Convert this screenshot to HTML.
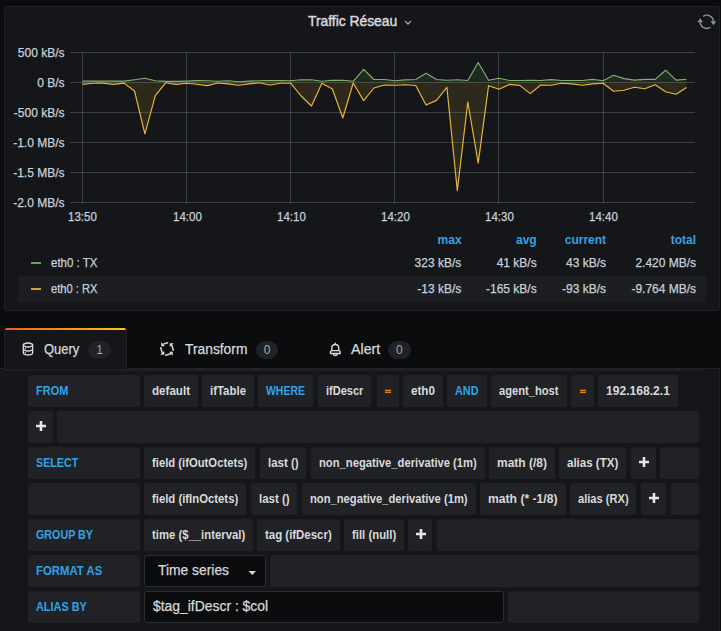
<!DOCTYPE html>
<html><head><meta charset="utf-8">
<style>
html,body{margin:0;padding:0;}
body{width:721px;height:631px;overflow:hidden;background:#0b0c0e;position:relative;font-family:"Liberation Sans",sans-serif;color:#c7d0d9;}
.abs{position:absolute;}
.t{position:absolute;white-space:nowrap;transform-origin:0 0;}
.bx{position:absolute;border-radius:3px;}
.panel{position:absolute;left:4px;top:6px;width:714px;height:303px;background:#141619;border:1px solid #202226;border-radius:3px;}
.badge{position:absolute;height:18px;width:22.4px;border-radius:9px;background:#202226;color:#9fa7b3;font-size:12px;line-height:18px;text-align:center;}
.qc{position:absolute;left:0;top:368px;width:719px;height:263px;background:#141619;border-top:1px solid #202226;border-right:1px solid #202226;}
.inp{position:absolute;background:#0b0c0e;border:1px solid #2a2d32;border-radius:3px;box-sizing:border-box;}
.caret{position:absolute;width:0;height:0;border-left:3.8px solid transparent;border-right:3.8px solid transparent;border-top:3.8px solid #d8d9da;}
</style></head><body>
<div class="panel"></div>
<svg class="abs" style="left:403px;top:18.5px" width="10" height="8" viewBox="0 0 10 8"><path d="M2 2 L5 5 L8 2" stroke="#9fa7b3" stroke-width="1.3" fill="none"/></svg>
<svg class="abs" style="left:696px;top:13px" width="22" height="18" viewBox="0 0 22 18">
 <g stroke="#8e9299" stroke-width="1.4" fill="none">
 <path d="M7.11,3.33 A6.6,6.6 0 0 1 17.4,8.6"/>
 <path d="M14.49,14.27 A6.6,6.6 0 0 1 4.2,9.0"/>
 </g>
 <path d="M14.6,8.3 L20.2,8.3 L17.4,12.3 Z" fill="#8e9299"/>
 <path d="M1.4,9.3 L7.0,9.3 L4.2,5.3 Z" fill="#8e9299"/>
</svg>
<svg class="abs" style="left:0;top:0" width="721" height="320">
 <g stroke="#c7d0d9" stroke-opacity="0.22" stroke-width="1" shape-rendering="crispEdges">
  <line x1="70" y1="52.5" x2="695" y2="52.5"/>
  <line x1="70" y1="82.5" x2="695" y2="82.5"/>
  <line x1="70" y1="112.5" x2="695" y2="112.5"/>
  <line x1="70" y1="142.5" x2="695" y2="142.5"/>
  <line x1="70" y1="172.5" x2="695" y2="172.5"/>
  <line x1="70" y1="202.5" x2="695" y2="202.5"/>
  <line x1="82.5" y1="52" x2="82.5" y2="203"/>
  <line x1="186.5" y1="52" x2="186.5" y2="203"/>
  <line x1="290.5" y1="52" x2="290.5" y2="203"/>
  <line x1="394.5" y1="52" x2="394.5" y2="203"/>
  <line x1="498.5" y1="52" x2="498.5" y2="203"/>
  <line x1="603.5" y1="52" x2="603.5" y2="203"/>
 </g>
 <path d="M82.4,82.0 L82.4,84.4 L92.8,83.3 L103.2,83.1 L113.6,84.4 L124.1,83.1 L134.5,91.0 L144.9,133.8 L155.3,95.6 L165.7,82.8 L176.1,84.4 L186.6,83.3 L197.0,84.2 L207.4,85.6 L217.8,83.0 L228.2,83.9 L238.6,85.3 L249.0,83.9 L259.5,82.8 L269.9,85.0 L280.3,83.3 L290.7,83.2 L301.1,96.0 L311.5,106.0 L321.9,83.3 L332.4,89.0 L342.8,118.0 L353.2,83.0 L363.6,100.6 L374.0,88.0 L384.4,85.0 L394.9,85.2 L405.3,84.7 L415.7,85.5 L426.1,105.0 L436.5,100.4 L446.9,87.3 L457.3,190.6 L467.8,102.0 L478.2,163.1 L488.6,85.7 L499.0,89.3 L509.4,84.4 L519.8,85.4 L530.2,93.6 L540.7,85.0 L551.1,85.2 L561.5,83.3 L571.9,83.9 L582.3,85.2 L592.7,83.9 L603.1,83.3 L613.6,91.3 L624.0,90.3 L634.4,87.2 L644.8,88.8 L655.2,84.7 L665.6,91.7 L676.1,94.2 L686.5,87.4 L686.5,82.0 Z" fill="#eab839" fill-opacity="0.12"/>
 <path d="M82.4,82.0 L82.4,81.1 L92.8,81.1 L103.2,81.1 L113.6,81.1 L124.1,81.1 L134.5,79.8 L144.9,78.3 L155.3,80.8 L165.7,81.4 L176.1,81.4 L186.6,81.1 L197.0,80.6 L207.4,80.8 L217.8,81.2 L228.2,80.8 L238.6,81.7 L249.0,81.1 L259.5,80.8 L269.9,80.6 L280.3,80.6 L290.7,80.7 L301.1,79.8 L311.5,79.8 L321.9,81.2 L332.4,80.3 L342.8,80.3 L353.2,81.3 L363.6,69.3 L374.0,79.5 L384.4,79.5 L394.9,80.8 L405.3,79.9 L415.7,79.5 L426.1,73.3 L436.5,79.5 L446.9,80.3 L457.3,79.7 L467.8,80.5 L478.2,62.5 L488.6,80.3 L499.0,78.3 L509.4,80.5 L519.8,80.5 L530.2,80.2 L540.7,80.5 L551.1,79.6 L561.5,80.5 L571.9,80.5 L582.3,80.5 L592.7,79.4 L603.1,80.7 L613.6,75.3 L624.0,78.6 L634.4,80.1 L644.8,79.4 L655.2,79.4 L665.6,70.2 L676.1,80.1 L686.5,79.2 L686.5,82.0 Z" fill="#7eb26d" fill-opacity="0.12"/>
 <polyline points="82.4,81.1 92.8,81.1 103.2,81.1 113.6,81.1 124.1,81.1 134.5,79.8 144.9,78.3 155.3,80.8 165.7,81.4 176.1,81.4 186.6,81.1 197.0,80.6 207.4,80.8 217.8,81.2 228.2,80.8 238.6,81.7 249.0,81.1 259.5,80.8 269.9,80.6 280.3,80.6 290.7,80.7 301.1,79.8 311.5,79.8 321.9,81.2 332.4,80.3 342.8,80.3 353.2,81.3 363.6,69.3 374.0,79.5 384.4,79.5 394.9,80.8 405.3,79.9 415.7,79.5 426.1,73.3 436.5,79.5 446.9,80.3 457.3,79.7 467.8,80.5 478.2,62.5 488.6,80.3 499.0,78.3 509.4,80.5 519.8,80.5 530.2,80.2 540.7,80.5 551.1,79.6 561.5,80.5 571.9,80.5 582.3,80.5 592.7,79.4 603.1,80.7 613.6,75.3 624.0,78.6 634.4,80.1 644.8,79.4 655.2,79.4 665.6,70.2 676.1,80.1 686.5,79.2" fill="none" stroke="#7eb26d" stroke-width="1.15" stroke-linejoin="round"/>
 <polyline points="82.4,84.4 92.8,83.3 103.2,83.1 113.6,84.4 124.1,83.1 134.5,91.0 144.9,133.8 155.3,95.6 165.7,82.8 176.1,84.4 186.6,83.3 197.0,84.2 207.4,85.6 217.8,83.0 228.2,83.9 238.6,85.3 249.0,83.9 259.5,82.8 269.9,85.0 280.3,83.3 290.7,83.2 301.1,96.0 311.5,106.0 321.9,83.3 332.4,89.0 342.8,118.0 353.2,83.0 363.6,100.6 374.0,88.0 384.4,85.0 394.9,85.2 405.3,84.7 415.7,85.5 426.1,105.0 436.5,100.4 446.9,87.3 457.3,190.6 467.8,102.0 478.2,163.1 488.6,85.7 499.0,89.3 509.4,84.4 519.8,85.4 530.2,93.6 540.7,85.0 551.1,85.2 561.5,83.3 571.9,83.9 582.3,85.2 592.7,83.9 603.1,83.3 613.6,91.3 624.0,90.3 634.4,87.2 644.8,88.8 655.2,84.7 665.6,91.7 676.1,94.2 686.5,87.4" fill="none" stroke="#eab839" stroke-width="1.15" stroke-linejoin="round"/>
</svg>
<div class="abs" style="left:31px;top:262px;width:10px;height:2px;background:#70a060"></div>
<div class="abs" style="left:18px;top:276px;width:688px;height:26px;background:#1c1e22"></div>
<div class="abs" style="left:31px;top:288px;width:10px;height:2px;background:#d0a334"></div>


<div class="qc"></div>
<div class="abs" style="left:4px;top:369px;width:699px;height:2px;background:#1d1f23"></div>
<div class="abs" style="left:4px;top:328px;width:121px;height:41px;background:#141619;border-left:1px solid #202226;border-right:1px solid #202226;border-radius:3px 3px 0 0;overflow:hidden">
 <div class="abs" style="left:0;top:0;width:121px;height:2px;background:linear-gradient(90deg,#f05a28,#fbca0a)"></div>
</div>
<svg class="abs" style="left:20px;top:341px" width="16" height="16" viewBox="0 0 24 24"><path fill="#d8d9da" d="M8,16.5a1,1,0,1,0,1,1A1,1,0,0,0,8,16.5ZM12,2C8,2,4,3.37,4,6V18c0,2.63,4,4,8,4s8-1.37,8-4V6C20,3.37,16,2,12,2Zm6,16c0,.71-2.28,2-6,2s-6-1.29-6-2V14.73A13.16,13.16,0,0,0,12,16a13.16,13.16,0,0,0,6-1.27Zm0-6c0,.71-2.28,2-6,2s-6-1.290-6-2V8.73A13.16,13.16,0,0,0,12,10a13.160,13.160,0,0,0,6-1.27ZM12,8C8.28,8,6,6.71,6,6s2.28-2,6-2,6,1.29,6,2S15.72,8,12,8ZM8,10.5a1,1,0,1,0,1,1A1,1,0,0,0,8,10.5Z"/></svg>
<div class="badge" style="left:88.3px;top:340.8px">1</div>
<svg class="abs" style="left:158px;top:340px" width="18" height="18" viewBox="0 0 18 18"><g stroke-linejoin="round"><path d="M3.2,2.3 L3.2,6.3 L7,6.3 Z" fill="#d8d9da"/><path d="M5.5,4.1 L9.6,2.8" stroke="#d8d9da" stroke-width="1.5" stroke-linecap="round"/><g transform="rotate(90 9 9)"><path d="M3.2,2.3 L3.2,6.3 L7,6.3 Z" fill="#d8d9da"/><path d="M5.3,4.2 L10.2,2.7" stroke="#d8d9da" stroke-width="1.5" stroke-linecap="round"/></g><g transform="rotate(180 9 9)"><path d="M3.2,2.3 L3.2,6.3 L7,6.3 Z" fill="#d8d9da"/><path d="M5.3,4.2 L10.2,2.7" stroke="#d8d9da" stroke-width="1.5" stroke-linecap="round"/></g><g transform="rotate(270 9 9)"><path d="M3.2,2.3 L3.2,6.3 L7,6.3 Z" fill="#d8d9da"/><path d="M5.3,4.2 L10.2,2.7" stroke="#d8d9da" stroke-width="1.5" stroke-linecap="round"/></g></g></svg>
<div class="badge" style="left:256px;top:340.8px">0</div>
<svg class="abs" style="left:326.6px;top:340.7px" width="16.6" height="16.6" viewBox="0 0 24 24"><path fill="#d8d9da" d="M18,13.18V10a6,6,0,0,0-5-5.91V3a1,1,0,0,0-2,0V4.09A6,6,0,0,0,6,10v3.18A3,3,0,0,0,4,16v2a1,1,0,0,0,1,1H8.14a4,4,0,0,0,7.72,0H19a1,1,0,0,0,1-1V16A3,3,0,0,0,18,13.18ZM8,10a4,4,0,0,1,8,0v3H8Zm4,10a2,2,0,0,1-1.72-1h3.44A2,2,0,0,1,12,20Zm6-3H6V16a1,1,0,0,1,1-1H17a1,1,0,0,1,1,1Z"/></svg>
<div class="badge" style="left:388.2px;top:340.8px">0</div>
<div class="t" style="left:308.40px;top:13.00px;font-size:14px;line-height:16px;color:#d8d9da;transform:scaleX(0.9882);-webkit-text-stroke:0.45px #d8d9da;">Traffic Réseau</div>
<div class="t" style="left:17.81px;top:45.60px;font-size:12px;line-height:14px;color:#c7d0d9;transform:scaleX(1.0000);-webkit-text-stroke:0.25px #c7d0d9;">500 kB/s</div>
<div class="t" style="left:37.15px;top:75.60px;font-size:12px;line-height:14px;color:#c7d0d9;transform:scaleX(1.0000);-webkit-text-stroke:0.25px #c7d0d9;">0 B/s</div>
<div class="t" style="left:13.81px;top:105.60px;font-size:12px;line-height:14px;color:#c7d0d9;transform:scaleX(1.0000);-webkit-text-stroke:0.25px #c7d0d9;">-500 kB/s</div>
<div class="t" style="left:13.15px;top:135.60px;font-size:12px;line-height:14px;color:#c7d0d9;transform:scaleX(1.0000);-webkit-text-stroke:0.25px #c7d0d9;">-1.0 MB/s</div>
<div class="t" style="left:13.15px;top:165.60px;font-size:12px;line-height:14px;color:#c7d0d9;transform:scaleX(1.0000);-webkit-text-stroke:0.25px #c7d0d9;">-1.5 MB/s</div>
<div class="t" style="left:13.15px;top:195.60px;font-size:12px;line-height:14px;color:#c7d0d9;transform:scaleX(1.0000);-webkit-text-stroke:0.25px #c7d0d9;">-2.0 MB/s</div>
<div class="t" style="left:68.39px;top:210.00px;font-size:12px;line-height:14px;color:#c7d0d9;transform:scaleX(0.9600);-webkit-text-stroke:0.25px #c7d0d9;">13:50</div>
<div class="t" style="left:172.59px;top:210.00px;font-size:12px;line-height:14px;color:#c7d0d9;transform:scaleX(0.9600);-webkit-text-stroke:0.25px #c7d0d9;">14:00</div>
<div class="t" style="left:276.79px;top:210.00px;font-size:12px;line-height:14px;color:#c7d0d9;transform:scaleX(0.9600);-webkit-text-stroke:0.25px #c7d0d9;">14:10</div>
<div class="t" style="left:380.99px;top:210.00px;font-size:12px;line-height:14px;color:#c7d0d9;transform:scaleX(0.9600);-webkit-text-stroke:0.25px #c7d0d9;">14:20</div>
<div class="t" style="left:485.19px;top:210.00px;font-size:12px;line-height:14px;color:#c7d0d9;transform:scaleX(0.9600);-webkit-text-stroke:0.25px #c7d0d9;">14:30</div>
<div class="t" style="left:589.39px;top:210.00px;font-size:12px;line-height:14px;color:#c7d0d9;transform:scaleX(0.9600);-webkit-text-stroke:0.25px #c7d0d9;">14:40</div>
<div class="t" style="left:437.58px;top:233.00px;font-size:12px;line-height:14px;color:#33a2e5;font-weight:bold;transform:scaleX(1.0000);">max</div>
<div class="t" style="left:516.02px;top:233.00px;font-size:12px;line-height:14px;color:#33a2e5;font-weight:bold;transform:scaleX(1.0000);">avg</div>
<div class="t" style="left:564.76px;top:233.00px;font-size:12px;line-height:14px;color:#33a2e5;font-weight:bold;transform:scaleX(1.0000);">current</div>
<div class="t" style="left:670.77px;top:233.00px;font-size:12px;line-height:14px;color:#33a2e5;font-weight:bold;transform:scaleX(1.0000);">total</div>
<div class="t" style="left:51.00px;top:256.00px;font-size:12px;line-height:14px;color:#c7d0d9;transform:scaleX(0.9593);-webkit-text-stroke:0.25px #c7d0d9;">eth0 : TX</div>
<div class="t" style="left:414.61px;top:256.00px;font-size:12px;line-height:14px;color:#c7d0d9;transform:scaleX(1.0000);-webkit-text-stroke:0.25px #c7d0d9;">323 kB/s</div>
<div class="t" style="left:496.68px;top:256.00px;font-size:12px;line-height:14px;color:#c7d0d9;transform:scaleX(1.0000);-webkit-text-stroke:0.25px #c7d0d9;">41 kB/s</div>
<div class="t" style="left:566.08px;top:256.00px;font-size:12px;line-height:14px;color:#c7d0d9;transform:scaleX(1.0000);-webkit-text-stroke:0.25px #c7d0d9;">43 kB/s</div>
<div class="t" style="left:635.40px;top:256.00px;font-size:12px;line-height:14px;color:#c7d0d9;transform:scaleX(1.0000);-webkit-text-stroke:0.25px #c7d0d9;">2.420 MB/s</div>
<div class="t" style="left:51.00px;top:282.00px;font-size:12px;line-height:14px;color:#c7d0d9;transform:scaleX(0.9295);-webkit-text-stroke:0.25px #c7d0d9;">eth0 : RX</div>
<div class="t" style="left:417.28px;top:282.00px;font-size:12px;line-height:14px;color:#c7d0d9;transform:scaleX(1.0000);-webkit-text-stroke:0.25px #c7d0d9;">-13 kB/s</div>
<div class="t" style="left:486.01px;top:282.00px;font-size:12px;line-height:14px;color:#c7d0d9;transform:scaleX(1.0000);-webkit-text-stroke:0.25px #c7d0d9;">-165 kB/s</div>
<div class="t" style="left:562.08px;top:282.00px;font-size:12px;line-height:14px;color:#c7d0d9;transform:scaleX(1.0000);-webkit-text-stroke:0.25px #c7d0d9;">-93 kB/s</div>
<div class="t" style="left:631.41px;top:282.00px;font-size:12px;line-height:14px;color:#c7d0d9;transform:scaleX(1.0000);-webkit-text-stroke:0.25px #c7d0d9;">-9.764 MB/s</div>
<div class="t" style="left:44.30px;top:341.00px;font-size:14px;line-height:16px;color:#d8d9da;transform:scaleX(0.9259);-webkit-text-stroke:0.25px #d8d9da;">Query</div>
<div class="t" style="left:184.60px;top:341.00px;font-size:14px;line-height:16px;color:#d8d9da;transform:scaleX(0.9863);-webkit-text-stroke:0.25px #d8d9da;">Transform</div>
<div class="t" style="left:350.80px;top:341.00px;font-size:14px;line-height:16px;color:#d8d9da;transform:scaleX(1.0144);-webkit-text-stroke:0.25px #d8d9da;">Alert</div>
<div class="bx" style="left:28px;top:375px;width:112.0px;height:32px;background:#202226"></div>
<div class="t" style="left:36.00px;top:383.00px;font-size:13px;line-height:16px;color:#33a2e5;font-weight:bold;transform:scaleX(0.8440);">FROM</div>
<div class="bx" style="left:144px;top:375px;width:54.0px;height:32px;background:#202226"></div>
<div class="t" style="left:152.00px;top:383.00px;font-size:13px;line-height:16px;color:#d8d9da;font-weight:bold;transform:scaleX(0.8918);">default</div>
<div class="bx" style="left:202px;top:375px;width:52.0px;height:32px;background:#202226"></div>
<div class="t" style="left:210.00px;top:383.00px;font-size:13px;line-height:16px;color:#d8d9da;font-weight:bold;transform:scaleX(0.8796);">ifTable</div>
<div class="bx" style="left:258.3px;top:375px;width:54.9px;height:32px;background:#202226"></div>
<div class="t" style="left:266.30px;top:383.00px;font-size:13px;line-height:16px;color:#33a2e5;font-weight:bold;transform:scaleX(0.8039);">WHERE</div>
<div class="bx" style="left:318.2px;top:375px;width:53.3px;height:32px;background:#202226"></div>
<div class="t" style="left:326.20px;top:383.00px;font-size:13px;line-height:16px;color:#d8d9da;font-weight:bold;transform:scaleX(0.8462);">ifDescr</div>
<div class="bx" style="left:376.5px;top:375px;width:22.3px;height:32px;background:#202226"></div>
<svg class="abs" style="left:383.95px;top:387px" width="8" height="8" viewBox="0 0 8 8"><rect x="0.9" y="2.7" width="6.2" height="1.4" fill="#eb7b18"/><rect x="0.9" y="4.7" width="6.2" height="1.4" fill="#eb7b18"/></svg>
<div class="bx" style="left:403.1px;top:375px;width:39.9px;height:32px;background:#202226"></div>
<div class="t" style="left:411.10px;top:383.00px;font-size:13px;line-height:16px;color:#d8d9da;font-weight:bold;transform:scaleX(0.8941);">eth0</div>
<div class="bx" style="left:447.3px;top:375px;width:39.5px;height:32px;background:#202226"></div>
<div class="t" style="left:455.30px;top:383.00px;font-size:13px;line-height:16px;color:#33a2e5;font-weight:bold;transform:scaleX(0.8344);">AND</div>
<div class="bx" style="left:491px;top:375px;width:75.5px;height:32px;background:#202226"></div>
<div class="t" style="left:499.00px;top:383.00px;font-size:13px;line-height:16px;color:#d8d9da;font-weight:bold;transform:scaleX(0.8581);">agent_host</div>
<div class="bx" style="left:570.8px;top:375px;width:23.0px;height:32px;background:#202226"></div>
<svg class="abs" style="left:578.60px;top:387px" width="8" height="8" viewBox="0 0 8 8"><rect x="0.9" y="2.7" width="6.2" height="1.4" fill="#eb7b18"/><rect x="0.9" y="4.7" width="6.2" height="1.4" fill="#eb7b18"/></svg>
<div class="bx" style="left:598.1px;top:375px;width:79.9px;height:32px;background:#202226"></div>
<div class="t" style="left:606.10px;top:383.00px;font-size:13px;line-height:16px;color:#d8d9da;font-weight:bold;transform:scaleX(0.9305);">192.168.2.1</div>
<div class="bx" style="left:28px;top:411px;width:24.7px;height:32px;background:#202226"></div>
<svg class="abs" style="left:34.85px;top:420.10px" width="12" height="12" viewBox="0 0 12 12"><path d="M1,4.7 H11 V7.3 H1 Z M4.7,1 H7.3 V11 H4.7 Z" fill="#e4e6e8"/></svg>
<div class="bx" style="left:57.3px;top:411px;width:641.7px;height:32px;background:#202226"></div>
<div class="bx" style="left:28px;top:447px;width:112.0px;height:32px;background:#202226"></div>
<div class="t" style="left:36.00px;top:455.00px;font-size:13px;line-height:16px;color:#33a2e5;font-weight:bold;transform:scaleX(0.8229);">SELECT</div>
<div class="bx" style="left:144.3px;top:447px;width:111.2px;height:32px;background:#202226"></div>
<div class="t" style="left:152.30px;top:455.00px;font-size:13px;line-height:16px;color:#d8d9da;font-weight:bold;transform:scaleX(0.8672);">field (ifOutOctets)</div>
<div class="bx" style="left:259.8px;top:447px;width:46.6px;height:32px;background:#202226"></div>
<div class="t" style="left:267.80px;top:455.00px;font-size:13px;line-height:16px;color:#d8d9da;font-weight:bold;transform:scaleX(0.8826);">last ()</div>
<div class="bx" style="left:311px;top:447px;width:173.8px;height:32px;background:#202226"></div>
<div class="t" style="left:319.00px;top:455.00px;font-size:13px;line-height:16px;color:#d8d9da;font-weight:bold;transform:scaleX(0.8633);">non_negative_derivative (1m)</div>
<div class="bx" style="left:489px;top:447px;width:65.9px;height:32px;background:#202226"></div>
<div class="t" style="left:497.00px;top:455.00px;font-size:13px;line-height:16px;color:#d8d9da;font-weight:bold;transform:scaleX(0.9212);">math (/8)</div>
<div class="bx" style="left:559.2px;top:447px;width:67.3px;height:32px;background:#202226"></div>
<div class="t" style="left:567.20px;top:455.00px;font-size:13px;line-height:16px;color:#d8d9da;font-weight:bold;transform:scaleX(0.8876);">alias (TX)</div>
<div class="bx" style="left:630.8px;top:447px;width:25.0px;height:32px;background:#202226"></div>
<svg class="abs" style="left:637.80px;top:456.10px" width="12" height="12" viewBox="0 0 12 12"><path d="M1,4.7 H11 V7.3 H1 Z M4.7,1 H7.3 V11 H4.7 Z" fill="#e4e6e8"/></svg>
<div class="bx" style="left:660.1px;top:447px;width:38.9px;height:32px;background:#202226"></div>
<div class="bx" style="left:28px;top:483px;width:112.0px;height:32px;background:#202226"></div>
<div class="bx" style="left:144.3px;top:483px;width:102.2px;height:32px;background:#202226"></div>
<div class="t" style="left:152.30px;top:491.00px;font-size:13px;line-height:16px;color:#d8d9da;font-weight:bold;transform:scaleX(0.8712);">field (ifInOctets)</div>
<div class="bx" style="left:250.8px;top:483px;width:46.7px;height:32px;background:#202226"></div>
<div class="t" style="left:258.80px;top:491.00px;font-size:13px;line-height:16px;color:#d8d9da;font-weight:bold;transform:scaleX(0.8855);">last ()</div>
<div class="bx" style="left:302.2px;top:483px;width:173.6px;height:32px;background:#202226"></div>
<div class="t" style="left:310.20px;top:491.00px;font-size:13px;line-height:16px;color:#d8d9da;font-weight:bold;transform:scaleX(0.8622);">non_negative_derivative (1m)</div>
<div class="bx" style="left:480.4px;top:483px;width:85.5px;height:32px;background:#202226"></div>
<div class="t" style="left:488.40px;top:491.00px;font-size:13px;line-height:16px;color:#d8d9da;font-weight:bold;transform:scaleX(0.9341);">math (* -1/8)</div>
<div class="bx" style="left:569.9px;top:483px;width:66.6px;height:32px;background:#202226"></div>
<div class="t" style="left:577.90px;top:491.00px;font-size:13px;line-height:16px;color:#d8d9da;font-weight:bold;transform:scaleX(0.8541);">alias (RX)</div>
<div class="bx" style="left:640.8px;top:483px;width:25.6px;height:32px;background:#202226"></div>
<svg class="abs" style="left:648.10px;top:492.10px" width="12" height="12" viewBox="0 0 12 12"><path d="M1,4.7 H11 V7.3 H1 Z M4.7,1 H7.3 V11 H4.7 Z" fill="#e4e6e8"/></svg>
<div class="bx" style="left:671.1px;top:483px;width:27.9px;height:32px;background:#202226"></div>
<div class="bx" style="left:28px;top:519px;width:112.0px;height:32px;background:#202226"></div>
<div class="t" style="left:36.00px;top:527.00px;font-size:13px;line-height:16px;color:#33a2e5;font-weight:bold;transform:scaleX(0.8248);">GROUP BY</div>
<div class="bx" style="left:144px;top:519px;width:109.2px;height:32px;background:#202226"></div>
<div class="t" style="left:152.00px;top:527.00px;font-size:13px;line-height:16px;color:#d8d9da;font-weight:bold;transform:scaleX(0.8716);">time ($__interval)</div>
<div class="bx" style="left:256.9px;top:519px;width:82.7px;height:32px;background:#202226"></div>
<div class="t" style="left:264.90px;top:527.00px;font-size:13px;line-height:16px;color:#d8d9da;font-weight:bold;transform:scaleX(0.8794);">tag (ifDescr)</div>
<div class="bx" style="left:343.8px;top:519px;width:60.2px;height:32px;background:#202226"></div>
<div class="t" style="left:351.80px;top:527.00px;font-size:13px;line-height:16px;color:#d8d9da;font-weight:bold;transform:scaleX(0.8746);">fill (null)</div>
<div class="bx" style="left:408.1px;top:519px;width:24.4px;height:32px;background:#202226"></div>
<svg class="abs" style="left:414.80px;top:528.10px" width="12" height="12" viewBox="0 0 12 12"><path d="M1,4.7 H11 V7.3 H1 Z M4.7,1 H7.3 V11 H4.7 Z" fill="#e4e6e8"/></svg>
<div class="bx" style="left:436.7px;top:519px;width:262.3px;height:32px;background:#202226"></div>
<div class="bx" style="left:28px;top:555px;width:112.0px;height:32px;background:#202226"></div>
<div class="t" style="left:36.00px;top:563.00px;font-size:13px;line-height:16px;color:#33a2e5;font-weight:bold;transform:scaleX(0.8731);">FORMAT AS</div>
<div class="inp" style="left:144px;top:555px;width:122px;height:32px;"></div>
<div class="t" style="left:157.80px;top:562.30px;font-size:14px;line-height:16px;color:#d8d9da;transform:scaleX(0.9885);-webkit-text-stroke:0.25px #d8d9da;">Time series</div>
<svg class="abs" style="left:247px;top:569px" width="11" height="8" viewBox="0 0 11 8"><path d="M1.6,1.9 L9,1.9 L5.3,6 Z" fill="#d8d9da"/></svg>
<div class="bx" style="left:270.3px;top:555px;width:428.7px;height:32px;background:#202226"></div>
<div class="bx" style="left:28px;top:591px;width:112.0px;height:32px;background:#202226"></div>
<div class="t" style="left:36.00px;top:599.00px;font-size:13px;line-height:16px;color:#33a2e5;font-weight:bold;transform:scaleX(0.8373);">ALIAS BY</div>
<div class="inp" style="left:144px;top:591px;width:360px;height:32px;"></div>
<div class="t" style="left:153.20px;top:598.00px;font-size:14px;line-height:16px;color:#d8d9da;transform:scaleX(0.9927);-webkit-text-stroke:0.25px #d8d9da;">$tag_ifDescr : $col</div>
<div class="bx" style="left:508.2px;top:591px;width:190.8px;height:32px;background:#202226"></div>
</body></html>
